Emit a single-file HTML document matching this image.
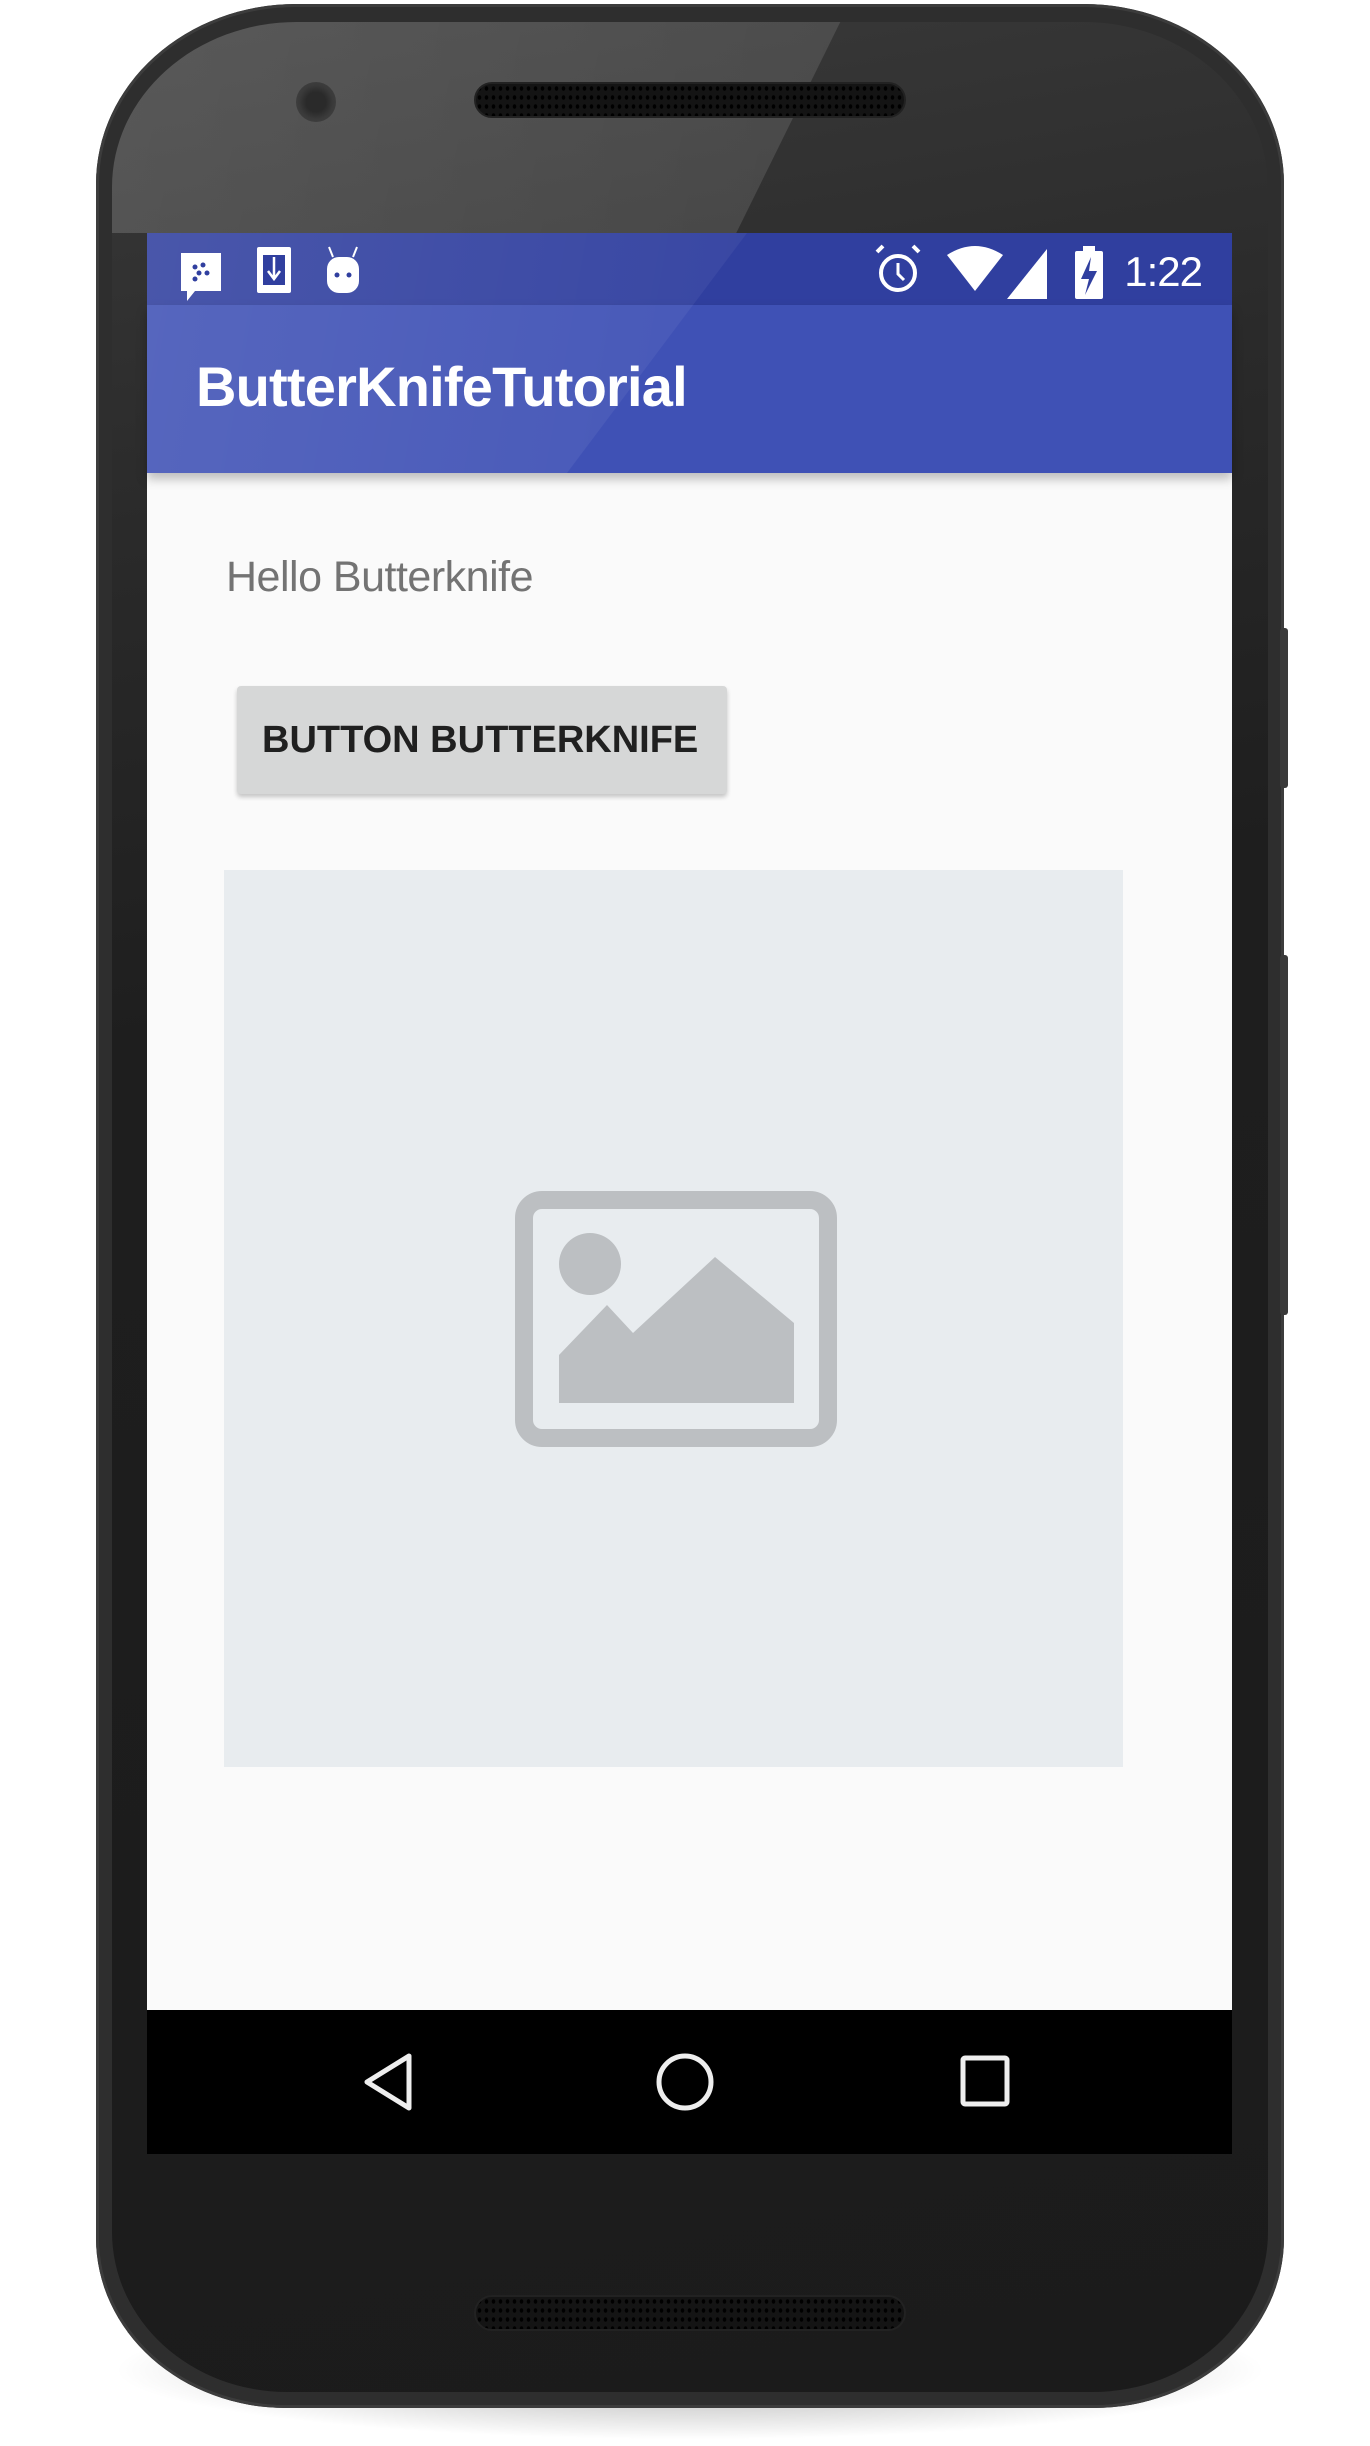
<!DOCTYPE html>
<html><head><meta charset="utf-8"><style>
*{margin:0;padding:0;box-sizing:border-box}
body{width:1370px;height:2446px;background:#fff;position:relative;overflow:hidden;font-family:"Liberation Sans",sans-serif}
.abs{position:absolute}
#shadow{left:110px;top:2300px;width:1160px;height:140px;border-radius:50%;background:radial-gradient(ellipse at center,rgba(0,0,0,.35),rgba(0,0,0,0) 70%)}
#phone{left:96px;top:4px;width:1188px;height:2404px;border-radius:200px 200px 190px 190px/180px 180px 170px 170px;background:#2e2e2e;box-shadow:inset 0 0 0 3px #3c3c3c}
#face{left:112px;top:22px;width:1156px;height:2370px;border-radius:185px 185px 175px 175px/165px 165px 160px 160px;background:linear-gradient(170deg,#3a3a3a 0%,#2a2a2a 20%,#1e1e1e 40%,#1b1b1b 100%)}
.spk{width:432px;height:36px;border-radius:18px;background:#141414;background-image:radial-gradient(#000 1.5px,transparent 2px);background-size:7px 9px;border:2px solid #222}
#screen{left:147px;top:233px;width:1085px;height:1777px;background:#fafafa}
#status{left:147px;top:233px;width:1085px;height:72px;background:#303f9f}
#appbar{left:147px;top:305px;width:1085px;height:168px;background:#3f51b5;box-shadow:0 6px 10px rgba(0,0,0,.25)}
#sheen{left:147px;top:233px;width:600px;height:240px;background:linear-gradient(100deg,rgba(255,255,255,.12),rgba(255,255,255,.04));clip-path:polygon(0 0,100% 0,70% 100%,0 100%)}
#nav{left:147px;top:2010px;width:1085px;height:144px;background:#000}
</style></head><body>
<div class="abs" id="shadow"></div>
<div class="abs" id="phone"></div>
<div class="abs" id="face"></div>
<div class="abs" style="left:112px;top:22px;width:1156px;height:211px;background:linear-gradient(100deg,rgba(255,255,255,.16) 0%,rgba(255,255,255,.08) 100%);border-radius:185px 185px 0 0/165px 165px 0 0;clip-path:polygon(0 0,63% 0,54% 100%,0 100%)"></div>
<div class="abs" style="left:1280px;top:628px;width:8px;height:160px;background:#3a3a3a;border-radius:3px"></div>
<div class="abs" style="left:1280px;top:955px;width:8px;height:360px;background:#3a3a3a;border-radius:3px"></div>
<div class="abs spk" style="left:474px;top:82px"></div>
<div class="abs spk" style="left:474px;top:2295px"></div>
<div class="abs" style="left:296px;top:82px;width:40px;height:40px;border-radius:50%;background:radial-gradient(#2a2a2a 35%,#3a3a3a 60%,#444 100%)"></div>
<div class="abs" id="screen"></div>
<div class="abs" id="status"></div>
<div class="abs" id="appbar"></div>
<div class="abs" id="sheen"></div>
<svg class="abs" style="left:147px;top:233px" width="1085" height="72">
 <g fill="#fff">
  <path d="M34 20h40v38H48l-8 10v-10h-6z"/>
  <rect x="110" y="14" width="34" height="46" rx="2"/>
  <rect x="180" y="24" width="32" height="36" rx="12"/>
  <path d="M736 13l-6 6M766 13l6 6" stroke="#fff" stroke-width="4"/>
  <path d="M800 22q28-18 56 0l-28 36z"/>
  <path d="M900 16v50h-40z"/>
  <rect x="928" y="18" width="28" height="48" rx="2"/>
  <rect x="936" y="13" width="12" height="6"/>
 </g>
 <g fill="#303f9f"><circle cx="48" cy="34" r="2.5"/><circle cx="56" cy="32" r="2.5"/><circle cx="52" cy="40" r="2.5"/><circle cx="60" cy="40" r="2.5"/><circle cx="48" cy="46" r="2.5"/>
  <rect x="116" y="22" width="22" height="30"/><circle cx="190" cy="42" r="2.5"/><circle cx="202" cy="42" r="2.5"/>
  <path d="M944 24l-10 22h8l-4 16 12-24h-8z"/></g>
 <path d="M127 24v20m-6-6l6 8 6-8" stroke="#fff" stroke-width="2.5" fill="none"/>
 <path d="M186 24l-4-10M206 24l4-10" stroke="#fff" stroke-width="2"/>
 <circle cx="751" cy="40" r="17" fill="none" stroke="#fff" stroke-width="4"/>
 <path d="M751 30v11l6 6" stroke="#fff" stroke-width="3" fill="none"/>
 <text x="1055" y="53" text-anchor="end" fill="#fff" font-size="42" font-family="Liberation Sans" letter-spacing="-1">1:22</text>
</svg>
<div class="abs" style="left:196px;top:354px;color:#fff;font-size:56px;font-weight:bold;letter-spacing:-0.8px">ButterKnifeTutorial</div>
<div class="abs" style="left:226px;top:553px;color:#737373;font-size:43px;letter-spacing:-.5px">Hello Butterknife</div>
<div class="abs" style="left:237px;top:686px;width:490px;height:108px;background:#d6d7d7;border-radius:4px;box-shadow:0 3px 5px rgba(0,0,0,.22)"></div>
<div class="abs" style="left:262px;top:719px;color:#202020;font-size:38px;font-weight:bold;white-space:nowrap">BUTTON BUTTERKNIFE</div>
<div class="abs" style="left:224px;top:870px;width:899px;height:897px;background:#e8ecef"></div>
<svg class="abs" style="left:515px;top:1191px" width="322" height="256">
 <rect x="9" y="9" width="304" height="238" rx="18" fill="none" stroke="#bcbfc2" stroke-width="18"/>
 <circle cx="75" cy="73" r="31" fill="#bcbfc2"/>
 <path d="M44 212v-48l48-50l26 28l82-76l79 66v80z" fill="#bcbfc2"/>
</svg>
<div class="abs" id="nav"></div>
<svg class="abs" style="left:147px;top:2010px" width="1085" height="144">
 <path d="M262 46v52l-42-26z" fill="none" stroke="#eee" stroke-width="5" stroke-linejoin="round"/>
 <circle cx="538" cy="72" r="26" fill="none" stroke="#eee" stroke-width="5"/>
 <rect x="816" y="48" width="44" height="46" rx="2" fill="none" stroke="#eee" stroke-width="5"/>
</svg>
</body></html>
